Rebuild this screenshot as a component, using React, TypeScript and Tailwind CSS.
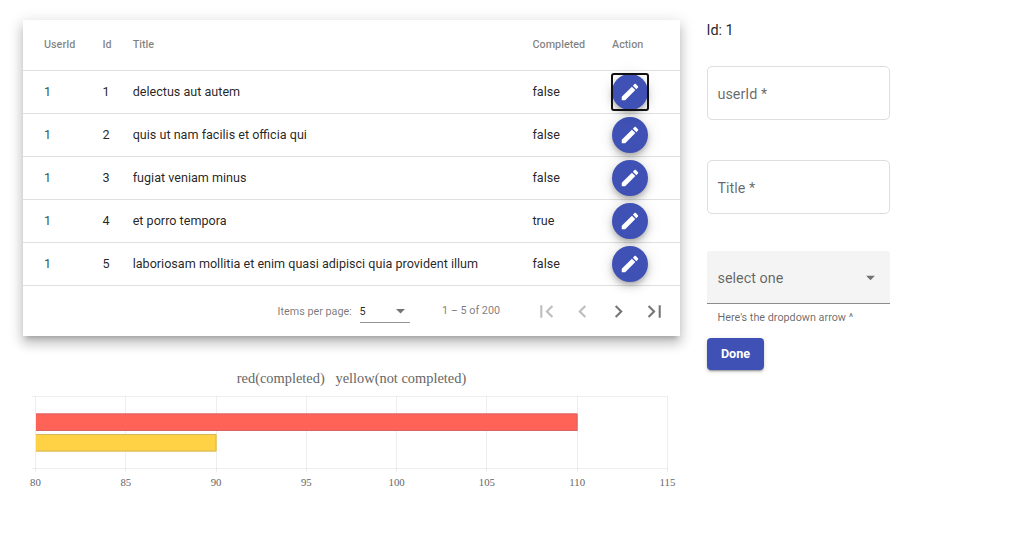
import { MdArrowDropDown, MdChevronLeft, MdChevronRight, MdFirstPage, MdLastPage } from "react-icons/md";

const rows = [
  { userId: 1, id: 1, title: "delectus aut autem", completed: false },
  { userId: 1, id: 2, title: "quis ut nam facilis et officia qui", completed: false },
  { userId: 1, id: 3, title: "fugiat veniam minus", completed: false },
  { userId: 1, id: 4, title: "et porro tempora", completed: true },
  { userId: 1, id: 5, title: "laboriosam mollitia et enim quasi adipisci quia provident illum", completed: false },
];

const columns = "grid grid-cols-[58.5px_30.2px_399.8px_79.5px_1fr] items-center border-b border-[#e0e0e0] pl-[21px]";

function PencilIcon() {
  return (
    <svg viewBox="0 0 24 24" className="size-[22px] fill-white">
      <path d="M3 17.25V21h3.75L17.81 9.94l-3.75-3.75L3 17.25zM20.71 7.04c.39-.39.39-1.02 0-1.41l-2.34-2.34c-.39-.39-1.02-.39-1.41 0l-1.83 1.83 3.75 3.75 1.83-1.83z" />
    </svg>
  );
}

function TodoTable() {
  return (
    <section className="h-[316px] w-[657px] bg-white shadow-[0_5px_5px_-3px_rgba(0,0,0,0.2),0_8px_10px_1px_rgba(0,0,0,0.14),0_3px_14px_2px_rgba(0,0,0,0.12)]">
      <div className={`${columns} h-[51px] text-[10.8px] font-medium text-black/50`}>
        <span>UserId</span>
        <span>Id</span>
        <span>Title</span>
        <span>Completed</span>
        <span>Action</span>
      </div>
      {rows.map((row, i) => (
        <div key={row.id} className={`${columns} h-[43px] text-[12.6px] text-black/87`}>
          <span className="text-[#2f5a50]">{row.userId}</span>
          <span>{row.id}</span>
          <span className="whitespace-nowrap">{row.title}</span>
          <span>{String(row.completed)}</span>
          <button
            aria-label="Edit"
            className={`flex size-9 items-center justify-center rounded-full bg-[#3f51b5] text-white shadow-[0_3px_5px_-1px_rgba(0,0,0,0.2),0_5px_9px_0_rgba(0,0,0,0.14),0_1px_16px_0_rgba(0,0,0,0.12)] ${i === 0 ? "relative" : ""}`}
          >
            <PencilIcon />
            {i === 0 && <span className="absolute -inset-px rounded-[3px] border-2 border-[#101010]" />}
          </button>
        </div>
      ))}
      <Paginator />
    </section>
  );
}

function Paginator() {
  return (
    <div className="flex h-[50px] pl-[254.5px] pt-[15px] text-[10.8px] text-black/54">
      <span className="w-[82px] pt-[3px] leading-4">Items per page:</span>
      <div className="flex h-[22px] w-[50px] items-center justify-between border-b border-black/42 pt-px text-black/87">
        <span>5</span>
        <svg viewBox="0 0 10 5" className="mr-[5px] mb-px h-[4.5px] w-[9px] fill-black/54">
          <path d="M0 0h10L5 5z" />
        </svg>
      </div>
      <span className="w-[85px] pl-[32.5px] pt-[2px] leading-4 whitespace-nowrap">1 – 5 of 200</span>
      <div className="ml-[39.5px] -mt-[2px] flex gap-[11px]">
        <MdFirstPage className="size-[25px] text-black/26" />
        <MdChevronLeft className="size-[25px] text-black/26" />
        <MdChevronRight className="size-[25px]" />
        <MdLastPage className="size-[25px]" />
      </div>
    </div>
  );
}

const ticks = [80, 85, 90, 95, 100, 105, 110, 115];
const scaleX = (value: number) => 35.5 + (value - 80) * 18.057;

function CompletionChart() {
  return (
    <svg width="697" height="140" className="block font-['Liberation_Serif',serif]" fill="#666">
      <text x="351.5" y="23" fontSize="14.4" textAnchor="middle" xmlSpace="preserve" className="whitespace-pre">
        {"red(completed)   yellow(not completed)"}
      </text>
      <g stroke="rgba(0,0,0,0.065)">
        <path d="M32 36.5H668M32 108.5H668" />
        {ticks.map((tick) => (
          <path key={tick} d={`M${Math.round(scaleX(tick) - 0.5) + 0.5} 36.5V112`} />
        ))}
      </g>
      <rect x="36" y="53.5" width="541.5" height="17.5" fill="#ff6358" />
      <path d="M36 54H577V70.5H36" fill="none" stroke="#d66564" />
      <rect x="36" y="74" width="180.5" height="17.5" fill="#ffd246" />
      <path d="M36 74.5H216V91H36" fill="none" stroke="#d6b65b" />
      {ticks.map((tick) => (
        <text key={tick} x={scaleX(tick)} y="126" fontSize="10.8" textAnchor="middle">
          {tick}
        </text>
      ))}
    </svg>
  );
}

function OutlinedField({ label }: { label: string }) {
  return (
    <div className="flex h-[54px] items-center rounded-[5px] border border-[#dedede] pl-[10px] pt-[3px] text-[14.4px] text-black/60">
      <span>{label}</span>
    </div>
  );
}

function EditForm() {
  return (
    <form className="ml-[26.5px] flex w-[183.5px] flex-col">
      <div className="h-[46px] pt-px text-[14.4px] leading-5 text-black/87">Id: 1</div>
      <OutlinedField label="userId *" />
      <div className="h-10" />
      <OutlinedField label="Title *" />
      <div className="mt-[37px] flex h-[53px] items-center justify-between rounded-t-[3px] border-b border-[#8c8c8c] bg-[#f4f4f4] pl-[11px] pr-[9px] text-[14.4px] text-black/60">
        <span className="pt-[3px]">select one</span>
        <MdArrowDropDown className="size-[21px] text-black/54" />
      </div>
      <div className="h-[34px] pl-[11px] pt-[6px] text-[10.8px] leading-4 text-black/60">Here's the dropdown arrow ^</div>
      <button
        type="button"
        className="ml-[0.5px] h-8 w-[57px] rounded-[4px] bg-[#3f51b5] text-[12.6px] font-bold text-white shadow-[0_3px_1px_-2px_rgba(0,0,0,0.2),0_2px_2px_0_rgba(0,0,0,0.14),0_1px_5px_0_rgba(0,0,0,0.12)]"
      >
        Done
      </button>
    </form>
  );
}

export default function App() {
  return (
    <main className="flex h-[543px] w-[1020px] overflow-hidden bg-white pt-5 font-[Roboto,sans-serif]">
      <div className="w-[680px]">
        <div className="ml-[23px]">
          <TodoTable />
        </div>
        <div className="mt-6">
          <CompletionChart />
        </div>
      </div>
      <EditForm />
    </main>
  );
}
